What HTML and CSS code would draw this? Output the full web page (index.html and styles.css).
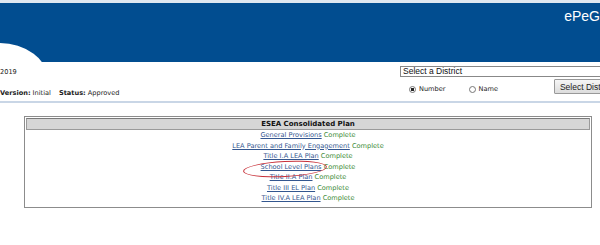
FILE: index.html
```html
<!DOCTYPE html>
<html>
	<head>
		<meta charset="utf-8" />
		<title>ePeGS - ESEA Consolidated Plan</title>
		<link rel="stylesheet" href="styles.css">
	</head>
	<body>
		<div id="page">
			<div class="banner">
				<span class="brand">ePeG</span>
			</div>
			<div class="info">
				<div class="info_left">
					<p class="year">2019</p>
					<p class="version"><b>Version:</b> Initial <b class="status">Status:</b> Approved</p>
				</div>
				<div class="controls">
					<select class="district">
						<option>Select a District</option>
					</select>
					<div class="control_row">
						<label class="choice"><input type="radio" name="by" checked /> Number</label>
						<label class="choice name"><input type="radio" name="by" /> Name</label>
						<button class="pick">Select District</button>
					</div>
				</div>
			</div>
			<div class="plan">
				<div class="plan_title">ESEA Consolidated Plan</div>
				<ul class="plan_list">
					<li><a href="#">General Provisions</a> <span class="done">Complete</span></li>
					<li><a href="#">LEA Parent and Family Engagement</a> <span class="done">Complete</span></li>
					<li><a href="#">Title I.A LEA Plan</a> <span class="done">Complete</span></li>
					<li><a href="#" class="circled">School Level Plans</a> <span class="done">Complete</span></li>
					<li><a href="#">Title II.A Plan</a> <span class="done">Complete</span></li>
					<li><a href="#">Title III EL Plan</a> <span class="done">Complete</span></li>
					<li><a href="#">Title IV.A LEA Plan</a> <span class="done">Complete</span></li>
				</ul>
			</div>
		</div>
	</body>
</html>
```

FILE: styles.css
```css
html,body{
	margin: 0;
	padding: 0;
	background: #fff;
}
p{
	margin: 0;
}
#page{
	width: 600px;
	height: 245px;
	overflow: hidden;
	font-family: "DejaVu Sans", Verdana, sans-serif;
	font-size: 6.6px;
	color: #222;
}
.banner{
	position: relative;
	height: 59px;
	border-top: 3px solid #dfe8f1;
	background: #014d90;
	overflow: hidden;
	display: flex;
	justify-content: flex-end;
}
.banner::after{
	content: "";
	position: absolute;
	left: -50px;
	top: 40px;
	width: 98px;
	height: 74px;
	border-radius: 50%;
	background: #fff;
}
.banner .brand{
	font-family: "Liberation Sans", Arial, sans-serif;
	font-size: 14px;
	color: #fff;
	margin-top: 5px;
	line-height: 16px;
	white-space: nowrap;
}
.info{
	display: flex;
	height: 39px;
	border-bottom: 2px solid #c9d6e6;
}
.info_left{
	width: 400px;
	padding-top: 5px;
}
.info_left p{
	line-height: 10px;
	white-space: nowrap;
}
.info_left .version{
	margin-top: 11px;
}
.info_left .status{
	margin-left: 6px;
}
.controls{
	width: 200px;
	flex-shrink: 0;
	padding-top: 4px;
}
.controls .district{
	display: block;
	width: 210px;
	height: 11px;
	margin: 0;
	padding: 0 2px;
	border: 1px solid #888;
	background: #fff;
	font-family: "Liberation Sans", Arial, sans-serif;
	font-size: 8.5px;
	line-height: 9px;
	color: #111;
	-webkit-appearance: none;
	appearance: none;
	border-radius: 0;
}
.control_row{
	display: flex;
	align-items: flex-start;
	margin-top: 2px;
	white-space: nowrap;
}
.choice{
	display: flex;
	align-items: center;
	margin-top: 6px;
	margin-left: 9px;
	line-height: 9px;
}
.choice.name{
	margin-left: 23px;
}
.choice input{
	-webkit-appearance: none;
	appearance: none;
	width: 7px;
	height: 7px;
	margin: 0 3px 0 0;
	border: 1px solid #777;
	border-radius: 50%;
	background: #fff;
	box-sizing: border-box;
}
.choice input:checked{
	background: radial-gradient(circle, #222 0, #222 1.4px, #fff 1.8px);
}
.pick{
	flex-shrink: 0;
	margin-left: 56px;
	height: 15px;
	padding: 0 5px;
	border: 1px solid #999;
	border-radius: 1px;
	background: linear-gradient(#f6f6f6, #dcdcdc);
	font-family: "Liberation Sans", Arial, sans-serif;
	font-size: 8.5px;
	color: #222;
}
.plan{
	width: 564px;
	margin: 13px 0 0 24px;
	border: 1px solid #8c8c8c;
	padding: 1px 1px 3px;
	text-align: center;
}
.plan_title{
	height: 10px;
	line-height: 10px;
	border: 1px solid #9a9a9a;
	border-top-color: #7a7a7a;
	background: #d6d6d6;
	font-size: 7px;
	font-weight: bold;
	color: #111;
}
.plan_list{
	list-style: none;
	margin: 0;
	padding: 0;
}
.plan_list li{
	line-height: 10.5px;
	white-space: nowrap;
}
.plan_list a{
	color: #33568f;
	text-decoration: underline;
}
.plan_list .done{
	color: #3a8a35;
}
.plan_list .circled{
	position: relative;
	display: inline-block;
}
.plan_list .circled::after{
	content: "";
	position: absolute;
	left: -18px;
	top: -1px;
	width: 82px;
	height: 14px;
	border: 1.3px solid #c8323a;
	border-radius: 50%;
	transform: rotate(-3deg);
}
```
